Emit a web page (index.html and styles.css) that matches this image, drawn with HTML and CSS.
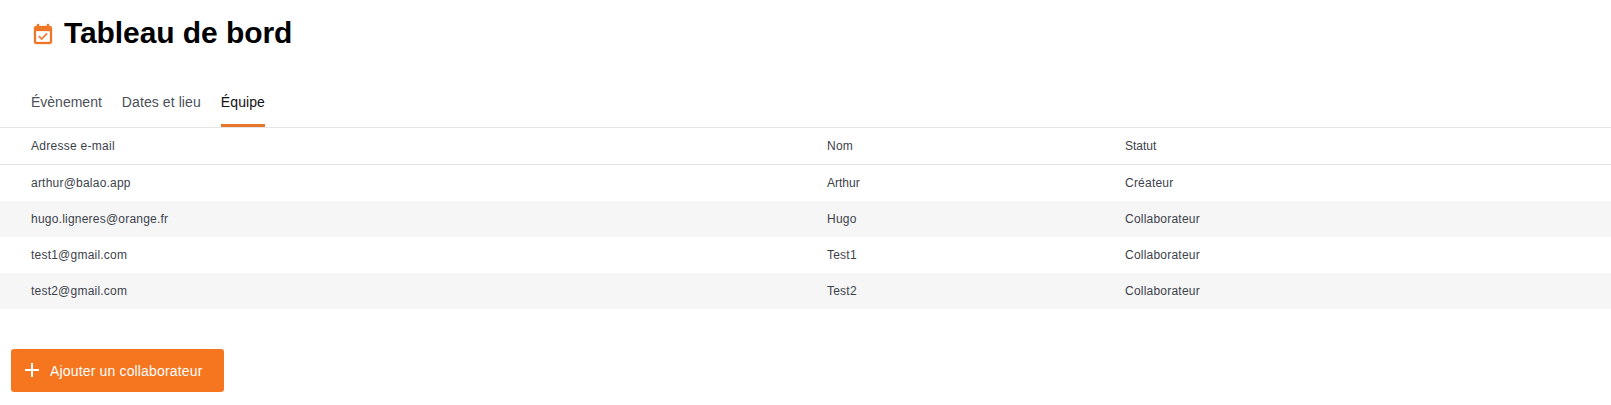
FILE: index.html
```html
<!DOCTYPE html>
<html lang="fr">
<head>
<meta charset="utf-8">
<title>Tableau de bord</title>
<link rel="stylesheet" href="styles.css">
</head>
<body>
<header class="page-header">
  <svg class="page-icon" viewBox="0 0 24 24" aria-hidden="true"><path d="M19 3h-1V1h-2v2H8V1H6v2H5c-1.11 0-2 .9-2 2v14c0 1.1.89 2 2 2h14c1.1 0 2-.9 2-2V5c0-1.1-.9-2-2-2zm0 16H5V8h14v11zM16.53 11.06L15.47 10l-4.88 4.88-2.12-2.12-1.06 1.06L10.59 17l5.94-5.94z"/></svg>
  <h1 class="page-title">Tableau de bord</h1>
</header>
<nav class="tabs">
  <a class="tab">Évènement</a>
  <a class="tab tab-wide">Dates et lieu</a>
  <a class="tab tab-wide tab-active">Équipe</a>
</nav>
<main>
  <table class="team">
    <colgroup><col class="col-mail"><col class="col-name"><col></colgroup>
    <thead><tr><th>Adresse e-mail</th><th>Nom</th><th>Statut</th></tr></thead>
    <tbody>
      <tr><td>arthur@balao.app</td><td class="tight">Arthur</td><td>Créateur</td></tr>
      <tr><td>hugo.ligneres@orange.fr</td><td>Hugo</td><td>Collaborateur</td></tr>
      <tr><td>test1@gmail.com</td><td>Test1</td><td>Collaborateur</td></tr>
      <tr><td>test2@gmail.com</td><td>Test2</td><td>Collaborateur</td></tr>
    </tbody>
  </table>
  <button class="add-button" type="button">
    <svg class="add-icon" viewBox="0 0 14 14" aria-hidden="true"><path d="M7 0v14M0 7h14"/></svg>
    <span>Ajouter un collaborateur</span>
  </button>
</main>
</body>
</html>
```
FILE: styles.css
```css
* { box-sizing: border-box; }
body {
  margin: 0;
  background: #fff;
  color: #3c424b;
  font-family: "Liberation Sans", Arial, sans-serif;
}
.page-header {
  display: flex;
  align-items: center;
  height: 66px;
  padding-left: 31px;
}
.page-icon {
  width: 24px;
  height: 24px;
  margin: 3px 9px 0 0;
  fill: #ee7728;
  stroke: #ee7728;
  stroke-width: 0.3;
}
.page-title {
  margin: 0;
  color: #000;
  font-size: 30px;
  line-height: 36px;
  letter-spacing: -0.08px;
}
.tabs {
  display: flex;
  gap: 20px;
  height: 62px;
  padding: 21px 31px 0;
  border-bottom: 1px solid #e3e4e6;
}
.tab {
  height: 40px;
  color: #4b5059;
  font-size: 14px;
  line-height: 30px;
}
.tab-wide { letter-spacing: 0.09px; }
.tab-active {
  border-bottom: 3px solid #e87628;
  color: #111;
}
.team {
  width: 100%;
  border-spacing: 0;
  table-layout: fixed;
  font-size: 12px;
  letter-spacing: 0.22px;
}
.col-mail { width: 796px; }
.col-name { width: 298px; }
.team th,
.team td {
  height: 36px;
  padding: 0 0 0 31px;
  font-weight: 400;
  text-align: left;
}
.team th {
  height: 37px;
  border-bottom: 1px solid #e3e4e6;
}
.team th:first-child { letter-spacing: 0.28px; }
.team th:last-child,
.team .tight { letter-spacing: 0; }
.team tbody tr:nth-child(even) { background: #f6f6f7; }
.add-button {
  display: flex;
  align-items: center;
  gap: 11px;
  width: 213px;
  height: 43px;
  margin: 40px 0 0 11px;
  padding: 0 0 0 14px;
  border: 0;
  border-radius: 3px;
  background: #f5761e;
  color: #fff;
  font: 14px "Liberation Sans", Arial, sans-serif;
  letter-spacing: 0.16px;
}
.add-icon {
  width: 14px;
  height: 14px;
  margin-bottom: 2px;
  fill: none;
  stroke: #fff;
  stroke-width: 2;
}
```
